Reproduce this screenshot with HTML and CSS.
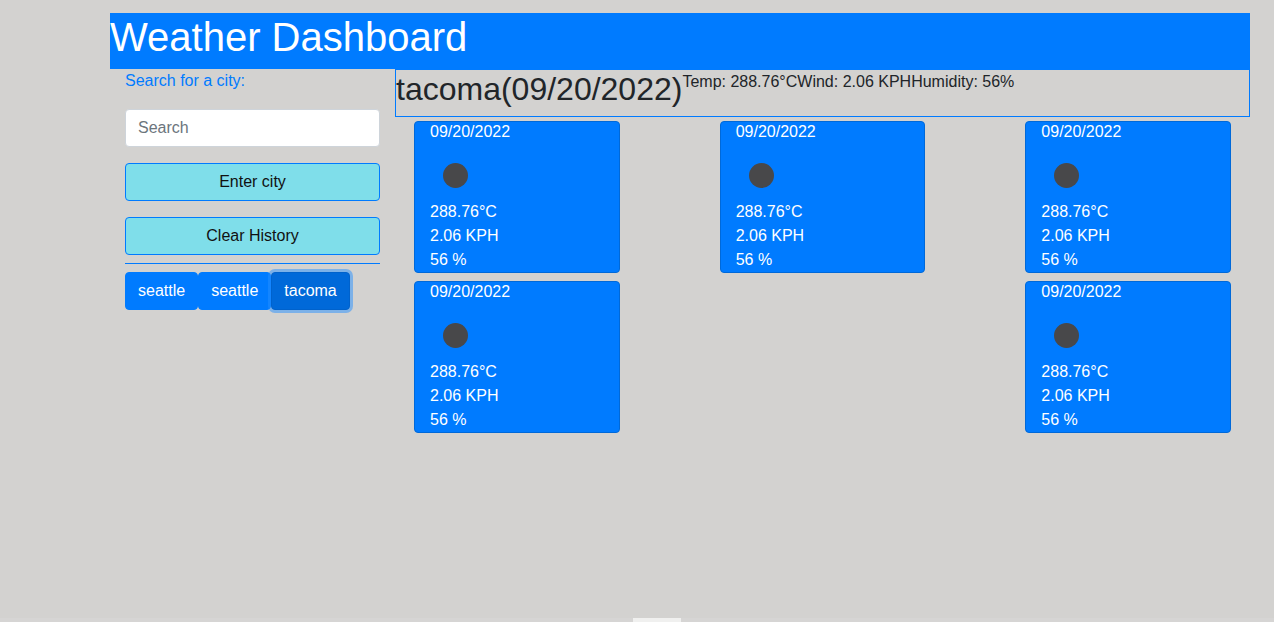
FILE: index.html
```html
<!DOCTYPE html>
<html lang="en">
<head>
  <meta charset="utf-8">
  <meta name="viewport" content="width=device-width, initial-scale=1">
  <title>Weather Dashboard</title>
  <link rel="stylesheet" href="styles.css">
</head>
<body>
  <div class="page">
    <header class="banner"><h1 class="banner-title">Weather Dashboard</h1></header>
    <div class="layout">
      <aside class="sidebar">
        <form class="search-form">
          <label class="search-label" for="city">Search for a city:</label>
          <input class="search-input" id="city" type="text" placeholder="Search">
          <button class="btn btn-wide" type="button">Enter city</button>
          <button class="btn btn-wide" type="button">Clear History</button>
        </form>
        <div class="history">
          <button class="btn btn-city" type="button">seattle</button>
          <button class="btn btn-city" type="button">seattle</button>
          <button class="btn btn-city btn-active" type="button">tacoma</button>
        </div>
      </aside>
      <main class="content">
        <section class="current">
          <h2 class="current-title">tacoma(09/20/2022)</h2>
          <span>Temp: 288.76°C</span>
          <span>Wind: 2.06 KPH</span>
          <span>Humidity: 56%</span>
        </section>
        <section class="forecast">
          <article class="card">
            <h3 class="card-date">09/20/2022</h3>
            <svg class="card-icon" viewBox="0 0 50 50" aria-hidden="true"><circle cx="25.500" cy="25.500" r="12.500"/></svg>
            <p>288.76°C</p><p>2.06 KPH</p><p>56 %</p>
          </article>
          <article class="card">
            <h3 class="card-date">09/20/2022</h3>
            <svg class="card-icon" viewBox="0 0 50 50" aria-hidden="true"><circle cx="25.500" cy="25.500" r="12.500"/></svg>
            <p>288.76°C</p><p>2.06 KPH</p><p>56 %</p>
          </article>
          <article class="card">
            <h3 class="card-date">09/20/2022</h3>
            <svg class="card-icon" viewBox="0 0 50 50" aria-hidden="true"><circle cx="25.500" cy="25.500" r="12.500"/></svg>
            <p>288.76°C</p><p>2.06 KPH</p><p>56 %</p>
          </article>
          <article class="card">
            <h3 class="card-date">09/20/2022</h3>
            <svg class="card-icon" viewBox="0 0 50 50" aria-hidden="true"><circle cx="25.500" cy="25.500" r="12.500"/></svg>
            <p>288.76°C</p><p>2.06 KPH</p><p>56 %</p>
          </article>
          <article class="card card-last">
            <h3 class="card-date">09/20/2022</h3>
            <svg class="card-icon" viewBox="0 0 50 50" aria-hidden="true"><circle cx="25.500" cy="25.500" r="12.500"/></svg>
            <p>288.76°C</p><p>2.06 KPH</p><p>56 %</p>
          </article>
        </section>
      </main>
    </div>
  </div>
  <div class="bottom-strip"><div class="bottom-handle"></div></div>
</body>
</html>
```

FILE: styles.css
```css
* {
  box-sizing: border-box;
}

body {
  margin: 0;
  background: #d3d2d0;
  color: #212529;
  font: 16px/24px "Liberation Sans", Arial, sans-serif;
}

h1, h2, h3, p {
  margin: 0;
  font-weight: 400;
}

.page {
  padding: 13px 24px 0 110px;
}

.banner {
  padding-bottom: 8px;
  background: #007bff;
  color: #fff;
}

.banner-title {
  font-size: 40px;
  line-height: 48px;
}

.layout {
  display: grid;
  grid-template-columns: 1fr 3fr;
}

.sidebar {
  padding: 0 15px;
}

.search-form {
  display: flex;
  flex-direction: column;
  gap: 16px;
  padding-bottom: 8px;
  border-bottom: 1px solid #007bff;
}

.search-label {
  color: #007bff;
}

.search-input {
  width: 100%;
  height: 38px;
  padding: 6px 12px;
  border: 1px solid #ced4da;
  border-radius: 4px;
  background: #fff;
  color: #495057;
  font: inherit;
}

.search-input::placeholder {
  color: #6c757d;
  opacity: 1;
}

.btn {
  padding: 6px 12px;
  border: 1px solid #007bff;
  border-radius: 4px;
  font: inherit;
  cursor: pointer;
}

.btn-wide {
  width: 100%;
  background: #7fdeea;
  color: #111;
}

.history {
  display: flex;
  flex-wrap: wrap;
  padding-top: 8px;
}

.btn-city {
  background: #007bff;
  color: #fff;
}

.btn-active {
  background: #0069d9;
  border-color: #0062cc;
  box-shadow: 0 0 0 3px rgba(38, 143, 255, 0.5);
}

.current {
  display: flex;
  padding-bottom: 8px;
  border: 1px solid #007bff;
}

.current-title {
  font-size: 32px;
  line-height: 38px;
}

.forecast {
  display: grid;
  grid-template-columns: repeat(3, 1fr);
  gap: 8px 100px;
  padding: 4px 19px;
}

.card {
  padding: 0 15px;
  border: 1px solid #0069d9;
  border-radius: 4px;
  background: #007bff;
  color: #fff;
}

.card-last {
  grid-column: 3;
}

.card-date {
  margin-bottom: 8px;
  font-size: 16px;
  line-height: 20px;
}

.card-icon {
  display: block;
  width: 50px;
  height: 50px;
  fill: #48484a;
}

.bottom-strip {
  position: fixed;
  right: 0;
  bottom: 0;
  left: 0;
  display: flex;
  justify-content: center;
  height: 4px;
  padding-left: 40px;
  background: #d6d5d4;
}

.bottom-handle {
  width: 48px;
  background: #f0f0ef;
}
```
